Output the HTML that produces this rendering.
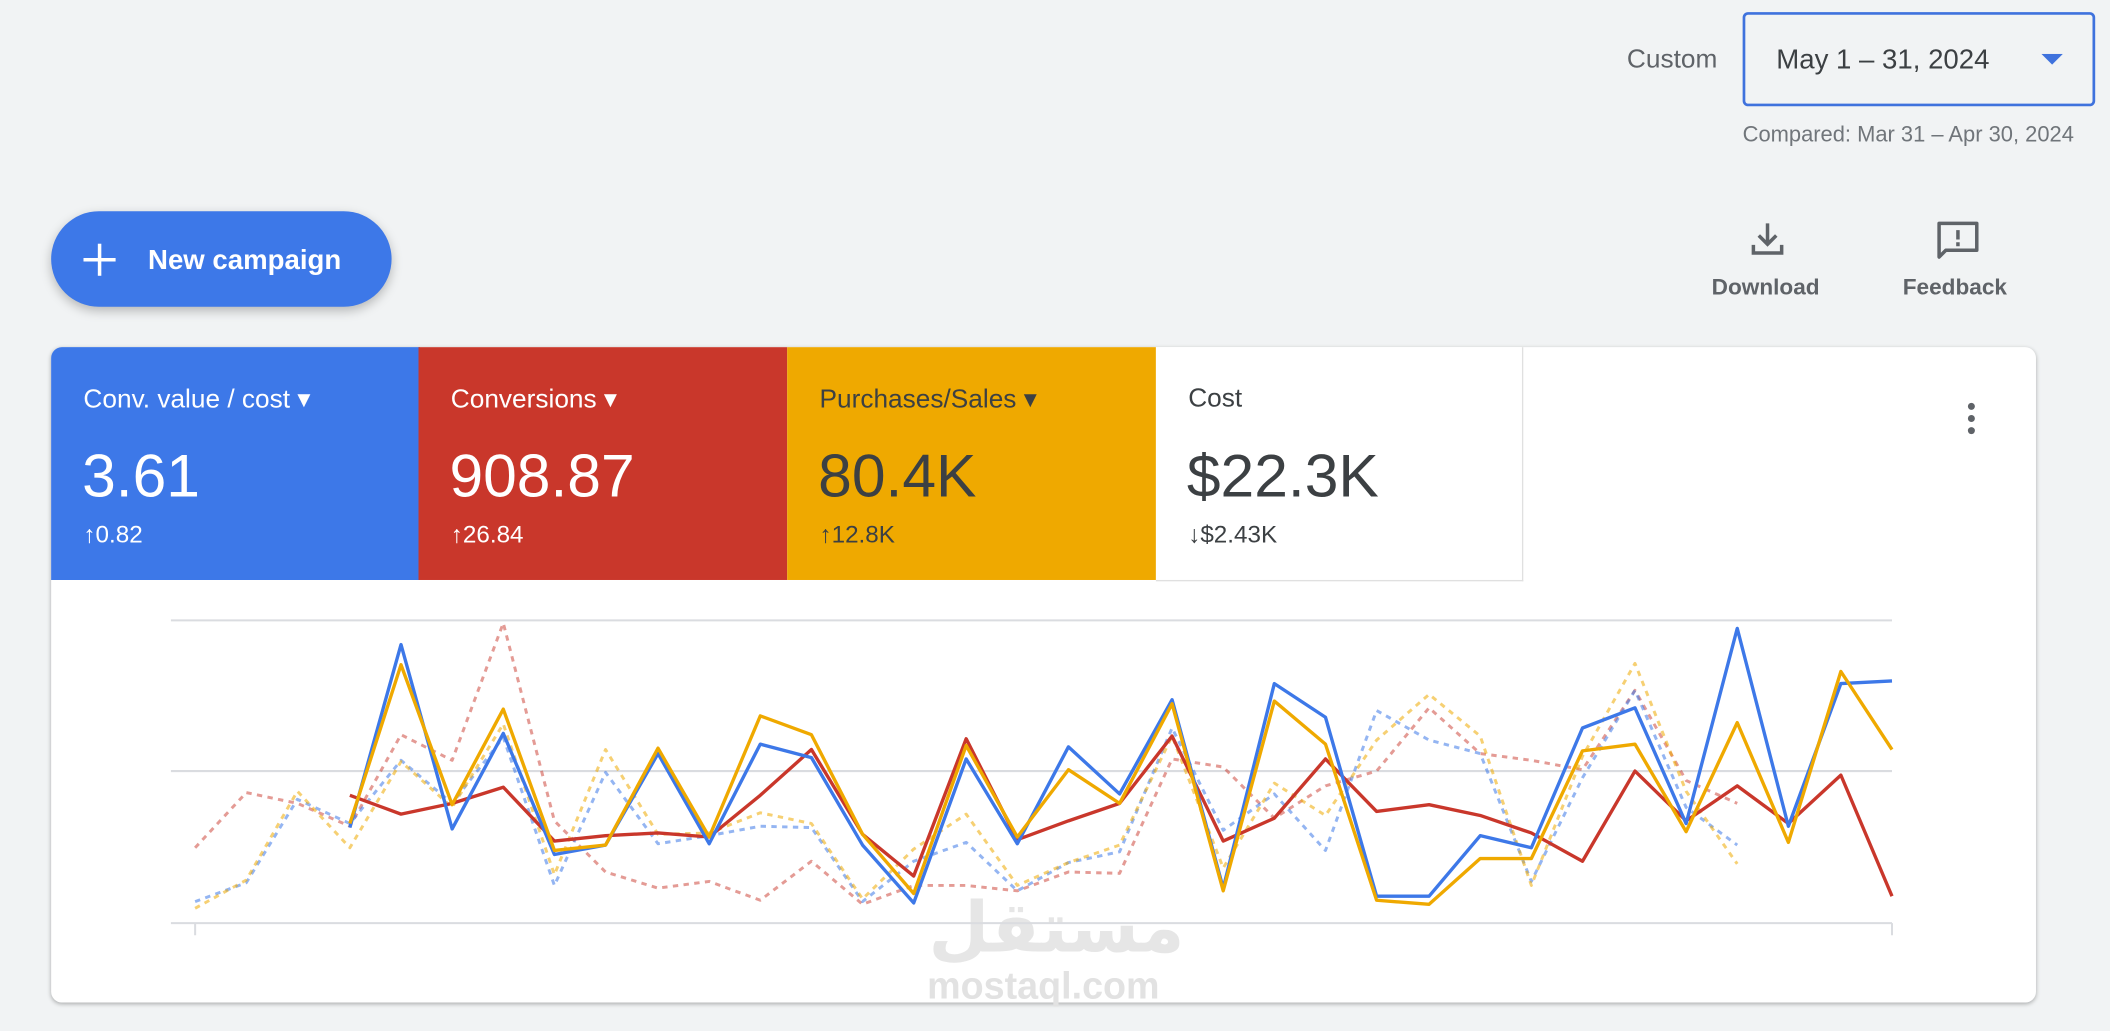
<!DOCTYPE html>
<html><head><meta charset="utf-8"><style>
html,body{margin:0;padding:0;background:#f1f3f4;overflow:hidden;width:2110px;height:1030px}
#w{position:absolute;left:0;top:0;width:1568px;height:766px;transform:scale(1.34566);transform-origin:0 0;font-family:"Liberation Sans",Arial,sans-serif}
.a{position:absolute;white-space:nowrap}
.tile{position:absolute;top:258px;height:173px;width:274px;color:#fff}
.tile .l{position:absolute;left:24px;top:27px;font-size:19.5px}
.tile .v{position:absolute;left:23px;top:70px;font-size:45px}
.tile .d{position:absolute;left:24px;top:129px;font-size:18px}
</style></head><body><div id="w">
<div class="a" style="left:1209px;top:33px;font-size:19.5px;color:#5f6368">Custom</div>
<div class="a" style="left:1295px;top:9px;width:258px;height:66px;border:2px solid #3f72dd;border-radius:4px;box-sizing:content-box"></div>
<div class="a" style="left:1320px;top:33px;font-size:20.5px;color:#3c4043">May 1 – 31, 2024</div>
<svg class="a" style="left:1517px;top:40px" width="16" height="9"><path d="M0 0H16L8 8Z" fill="#3f72dd"/></svg>
<div class="a" style="left:1295px;top:91px;font-size:16.3px;color:#70757a">Compared: Mar 31 – Apr 30, 2024</div>
<div class="a" style="left:38px;top:157px;width:253px;height:71px;border-radius:36px;background:#3d78e8;box-shadow:0 3px 8px rgba(0,0,0,.25)"></div>
<svg class="a" style="left:62px;top:181px" width="24" height="24"><path d="M12 0V24M0 12H24" stroke="#fff" stroke-width="2.6"/></svg>
<div class="a" style="left:110px;top:182px;font-size:20.5px;font-weight:bold;color:#fff">New campaign</div>
<svg class="a" style="left:1300px;top:164px" width="27" height="27" viewBox="0 0 27 27"><path d="M13.5 2V17M7 11L13.5 17.5L20 11M3 18V24H24V18" fill="none" stroke="#5f6368" stroke-width="2.6"/></svg>
<div class="a" style="left:1272px;top:204px;font-size:16.8px;font-weight:bold;color:#5f6368">Download</div>
<svg class="a" style="left:1438px;top:163px" width="34" height="32" viewBox="0 0 34 32"><path d="M3 3H31V23H8L3 28Z" fill="none" stroke="#5f6368" stroke-width="2.6" stroke-linejoin="round"/><path d="M17 8V15M17 17V20" stroke="#5f6368" stroke-width="2.6"/></svg>
<div class="a" style="left:1414px;top:204px;font-size:16.8px;font-weight:bold;color:#5f6368">Feedback</div>
<div class="a" style="left:38px;top:258px;width:1475px;height:487px;background:#fff;border-radius:8px;box-shadow:0 1px 3px rgba(0,0,0,.3);overflow:hidden"></div>
<div class="tile" style="left:38px;background:#3d78e8;border-top-left-radius:8px"><div class="l">Conv. value / cost ▾</div><div class="v">3.61</div><div class="d">↑0.82</div></div>
<div class="tile" style="left:311px;background:#c9372b"><div class="l">Conversions ▾</div><div class="v">908.87</div><div class="d">↑26.84</div></div>
<div class="tile" style="left:585px;background:#efa900;color:#3c4043"><div class="l">Purchases/Sales ▾</div><div class="v">80.4K</div><div class="d">↑12.8K</div></div>
<div class="tile" style="left:859px;width:272px;background:#fff;color:#3c4043;border-right:1px solid #e0e0e0;border-bottom:1px solid #e0e0e0"><div class="l">Cost</div><div class="v">$22.3K</div><div class="d">↓$2.43K</div></div>
<svg class="a" style="left:1460px;top:298px" width="10" height="26"><circle cx="5" cy="4" r="2.6" fill="#5f6368"/><circle cx="5" cy="13" r="2.6" fill="#5f6368"/><circle cx="5" cy="22" r="2.6" fill="#5f6368"/></svg>
<div class="a" style="left:690px;top:660px;font-size:52px;font-weight:bold;color:#e6e6e6;font-family:'DejaVu Sans',sans-serif">مستقل</div>
<div class="a" style="left:689px;top:717px;font-size:28px;font-weight:bold;color:#e2e2e2">mostaql.com</div>
<svg class="a" style="left:0;top:0" width="1568" height="766">
<g stroke="#dadce0" stroke-width="1.5"><path d="M127 461H1406M127 573H1406M127 686H1406M145 686V695M1406 686V695"/></g>
<g fill="none" stroke-linejoin="round">
<polyline stroke="#c9372b" stroke-width="2.2" stroke-dasharray="4 4" opacity=".5" points="145,630 183,589 221,597 260,614 298,546 336,565 374,463 412,610 450,648 489,660 527,655 565,669 603,640 641,672 679,658 718,658 756,662 794,648 832,649 871,564 909,570 947,608 985,584 1023,573 1062,526 1100,560 1138,565 1176,572 1215,513 1253,580 1291,597"/>
<polyline stroke="#3d78e8" stroke-width="2.2" stroke-dasharray="4 4" opacity=".55" points="145,670 183,656 221,594 260,612 298,565 336,597 374,548 412,658 450,574 489,627 527,621 565,614 603,615 641,670 679,640 718,626 756,662 794,641 832,633 871,541 909,617 947,590 985,632 1023,528 1062,550 1100,560 1138,655 1176,578 1215,513 1253,600 1291,628"/>
<polyline stroke="#efa900" stroke-width="2.2" stroke-dasharray="4 4" opacity=".55" points="145,675 183,654 221,588 260,630 298,566 336,600 374,538 412,650 450,557 489,620 527,619 565,604 603,612 641,668 679,631 718,605 756,658 794,641 832,628 871,547 909,645 947,582 985,606 1023,550 1062,516 1100,547 1138,658 1176,562 1215,493 1253,588 1291,642"/>
<polyline stroke="#c9372b" stroke-width="2.5" points="260,591 298,605 336,597 374,585 412,625 450,621 489,619 527,622 565,591 603,557 641,620 679,651 718,549 756,624 794,610 832,597 871,547 909,625 947,608 985,564 1023,603 1062,598 1100,606 1138,619 1176,640 1215,573 1253,610 1291,584 1329,612 1368,576 1406,666"/>
<polyline stroke="#3d78e8" stroke-width="2.5" points="260,615 298,479 336,616 374,545 412,635 450,628 489,560 527,627 565,553 603,563 641,628 679,671 718,564 756,627 794,555 832,590 871,520 909,660 947,508 985,533 1023,666 1062,666 1100,621 1138,630 1176,541 1215,526 1253,612 1291,467 1329,614 1368,508 1406,506"/>
<polyline stroke="#efa900" stroke-width="2.5" points="260,612 298,494 336,598 374,527 412,632 450,628 489,556 527,622 565,532 603,546 641,620 679,664 718,554 756,622 794,572 832,597 871,523 909,662 947,521 985,553 1023,669 1062,672 1100,638 1138,638 1176,558 1215,553 1253,618 1291,537 1329,626 1368,499 1406,557"/>
</g></svg>
</div></body></html>
